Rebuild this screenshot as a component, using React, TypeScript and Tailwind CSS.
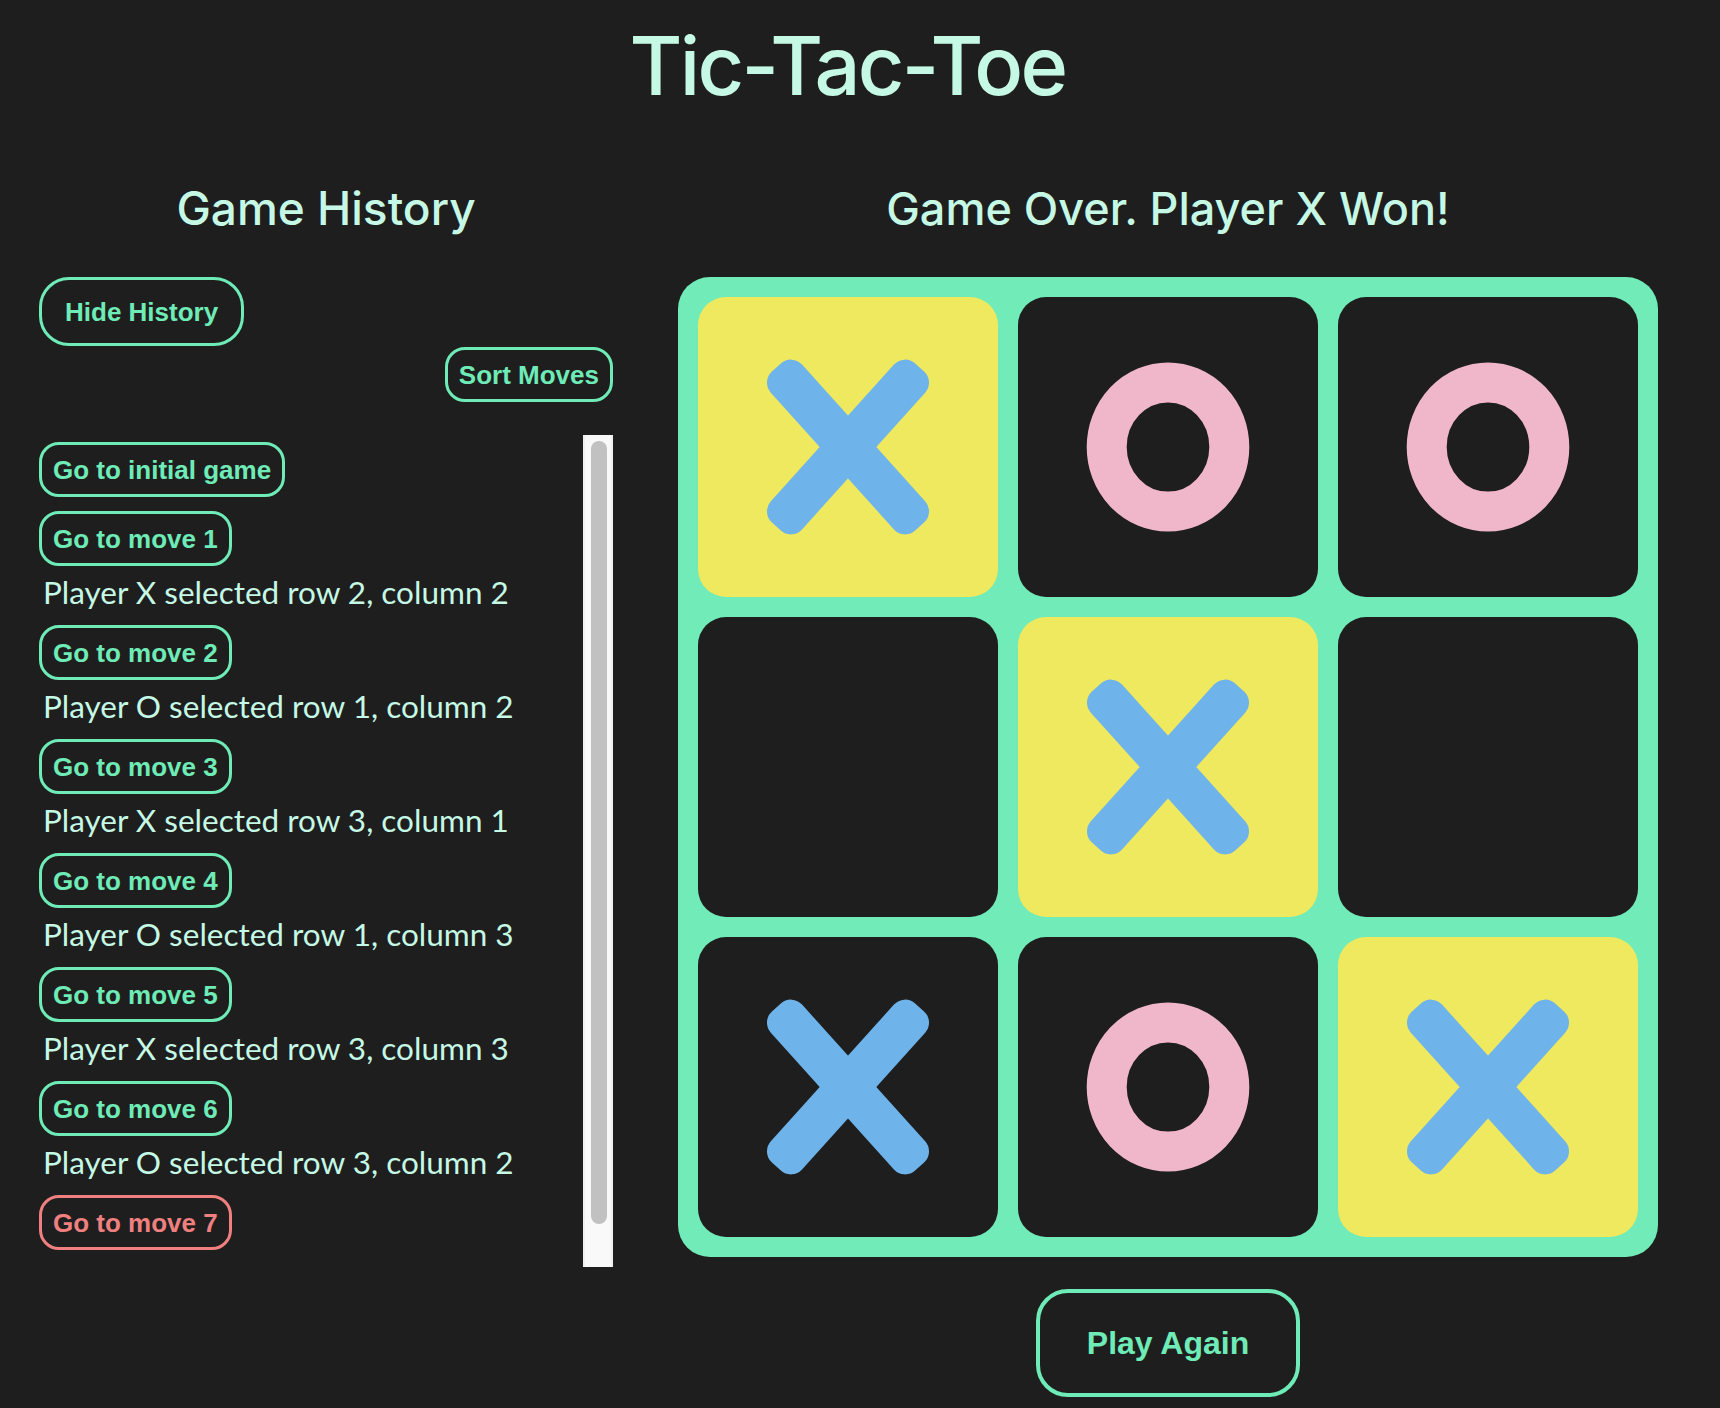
import React from "react";

type Cell = "X" | "O" | null;

const board: Cell[] = ["X", "O", "O", null, "X", null, "X", "O", "X"];
const winning = [0, 4, 8];

const moves = [
  "Player X selected row 2, column 2",
  "Player O selected row 1, column 2",
  "Player X selected row 3, column 1",
  "Player O selected row 1, column 3",
  "Player X selected row 3, column 3",
  "Player O selected row 3, column 2",
];

function XMark() {
  return (
    <svg width="200" height="200" viewBox="-100 -100 200 200">
      <g fill="#6eb4eb">
        <rect x="-107" y="-21" width="214" height="42" rx="15" transform="rotate(48)" />
        <rect x="-107" y="-21" width="214" height="42" rx="15" transform="rotate(-48)" />
      </g>
    </svg>
  );
}

function OMark() {
  return (
    <svg width="180" height="180" viewBox="-90 -90 180 180">
      <ellipse cx="0" cy="0" rx="61.3" ry="64.6" fill="none" stroke="#f0b6ca" strokeWidth="40" />
    </svg>
  );
}

const smallBtn =
  "h-[55px] px-[11px] rounded-[20px] border-[3px] border-solid border-[#6eebb7] text-[#6eebb7] font-bold text-[26px] leading-none whitespace-nowrap flex items-center bg-transparent";
const font = { fontFamily: '"Liberation Sans", Arial, sans-serif' };
const headFont = { fontFamily: 'Inter, "Noto Sans", sans-serif' };

export default function App() {
  return (
    <div className="min-h-[1408px] w-full bg-[#1e1e1e]">
      <div className="w-[1695px] pt-[26px]">
        <h1
          className="text-center text-[81px] leading-none font-medium tracking-[-2.7px] text-[#c5f8e5]"
          style={headFont}
        >
          Tic-Tac-Toe
        </h1>
        <div className="mt-[79px] flex pl-[39px] gap-[65px]">
          {/* Left column */}
          <div className="w-[574px] flex flex-col">
            <h2
              className="text-center text-[46px] leading-[45px] font-medium text-[#c5f8e5]"
              style={headFont}
            >
              Game History
            </h2>
            <div className="mt-[46px] flex">
              <button
                className="h-[69px] px-[23px] rounded-[30px] border-[3px] border-solid border-[#6eebb7] text-[#6eebb7] font-bold text-[26px] leading-none whitespace-nowrap flex items-center"
                style={font}
              >
                Hide History
              </button>
            </div>
            <div className="mt-[1px] flex justify-end">
              <button className={smallBtn} style={font}>
                Sort Moves
              </button>
            </div>
            <div className="mt-[33px] h-[832px] flex">
              <div className="flex-1 h-full overflow-hidden pt-[7px]">
                <ul className="flex flex-col gap-[14px]">
                  <li>
                    <button className={smallBtn} style={font}>
                      Go to initial game
                    </button>
                  </li>
                  {moves.map((m, i) => (
                    <li key={i}>
                      <button className={smallBtn} style={font}>
                        {`Go to move ${i + 1}`}
                      </button>
                      <p
                        className="mt-[7px] pl-[4px] text-[31.5px] leading-[38px] text-[#c5f8e5] whitespace-nowrap"
                        style={{ fontFamily: 'Lato, "Open Sans", sans-serif' }}
                      >
                        {m}
                      </p>
                    </li>
                  ))}
                  <li>
                    <button
                      className="h-[55px] px-[11px] rounded-[20px] border-[3px] border-solid border-[#f08080] text-[#f08080] font-bold text-[26px] leading-none whitespace-nowrap flex items-center"
                      style={font}
                    >
                      Go to move 7
                    </button>
                  </li>
                </ul>
              </div>
              <div className="w-[30px] h-full bg-[#f9f9f9] border-x-[2px] border-solid border-[#efefef] pt-[6px] pl-[6px] pr-[4px]">
                <div className="w-[16px] h-[783px] rounded-full bg-[#c1c1c1]" />
              </div>
            </div>
          </div>

          {/* Right column */}
          <div className="w-[980px] flex flex-col items-center">
            <h2
              className="text-center text-[45px] leading-none font-medium text-[#c5f8e5]"
              style={headFont}
            >
              Game Over. Player X Won!
            </h2>
            <div className="mt-[46px] w-[980px] rounded-[32px] bg-[#71ebb7] p-[20px] grid grid-cols-3 gap-[20px]">
              {board.map((c, i) => (
                <div
                  key={i}
                  className={
                    "h-[300px] rounded-[28px] flex items-center justify-center " +
                    (winning.includes(i) ? "bg-[#efe95f]" : "bg-[#1e1e1e]")
                  }
                >
                  {c === "X" ? <XMark /> : c === "O" ? <OMark /> : null}
                </div>
              ))}
            </div>
            <button
              className="mt-[32px] h-[108px] px-[47px] rounded-[32px] border-[4px] border-solid border-[#6eebb7] text-[#6eebb7] font-bold text-[32px] leading-none flex items-center"
              style={font}
            >
              Play Again
            </button>
          </div>
        </div>
      </div>
    </div>
  );
}
